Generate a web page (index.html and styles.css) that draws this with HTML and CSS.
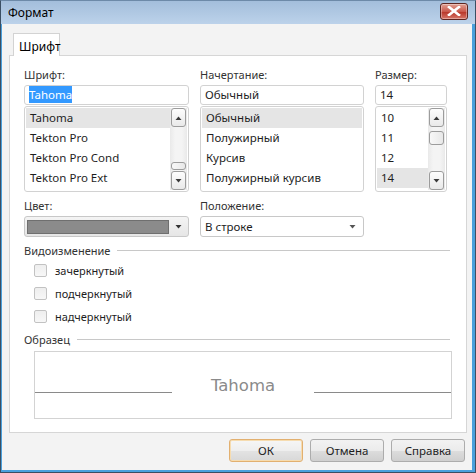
FILE: index.html
```html
<!DOCTYPE html>
<html>
<head>
<meta charset="utf-8">
<link rel="stylesheet" href="styles.css">
</head>
<body>
<div class="window">
  <div class="titlebar">
    <span class="title">Формат</span>
    <div class="close"><svg width="14" height="10" viewBox="0 0 14 10"><path d="M2 1 L12 9 M12 1 L2 9" stroke="#fff" stroke-width="2.6" stroke-linecap="square" fill="none"/></svg></div>
  </div>
  <div class="client">
    <div class="tabs"><div class="tab">Шрифт</div></div>
    <div class="panel">
      <div class="grid">
        <div class="field">
          <div class="label">Шрифт:</div>
          <div class="input"><span class="sel">Tahoma</span></div>
          <div class="list">
            <div class="items">
              <div class="item on">Tahoma</div>
              <div class="item">Tekton Pro</div>
              <div class="item">Tekton Pro Cond</div>
              <div class="item">Tekton Pro Ext</div>
            </div>
            <div class="sb">
              <div class="sbtn"><svg width="7" height="4" viewBox="0 0 7 4"><path d="M0.5 4 L3.5 0.5 L6.5 4Z" fill="#3a3a3a"/></svg></div>
              <div class="track"><div class="thumb t1"></div></div>
              <div class="sbtn"><svg width="7" height="4" viewBox="0 0 7 4"><path d="M0.5 0 L3.5 3.5 L6.5 0Z" fill="#3a3a3a"/></svg></div>
            </div>
          </div>
        </div>
        <div class="field">
          <div class="label">Начертание:</div>
          <div class="input">Обычный</div>
          <div class="list">
            <div class="items">
              <div class="item on">Обычный</div>
              <div class="item">Полужирный</div>
              <div class="item">Курсив</div>
              <div class="item">Полужирный курсив</div>
            </div>
          </div>
        </div>
        <div class="field">
          <div class="label">Размер:</div>
          <div class="input">14</div>
          <div class="list">
            <div class="items">
              <div class="item">10</div>
              <div class="item">11</div>
              <div class="item">12</div>
              <div class="item on">14</div>
            </div>
            <div class="sb">
              <div class="sbtn"><svg width="7" height="4" viewBox="0 0 7 4"><path d="M0.5 4 L3.5 0.5 L6.5 4Z" fill="#3a3a3a"/></svg></div>
              <div class="track"><div class="thumb t2"></div></div>
              <div class="sbtn"><svg width="7" height="4" viewBox="0 0 7 4"><path d="M0.5 0 L3.5 3.5 L6.5 0Z" fill="#3a3a3a"/></svg></div>
            </div>
          </div>
        </div>
        <div class="field">
          <div class="label">Цвет:</div>
          <div class="combo color">
            <div class="swatch"></div>
            <div class="arrow"><svg width="7" height="4" viewBox="0 0 7 4"><path d="M0.5 0 L3.5 3.5 L6.5 0Z" fill="#333"/></svg></div>
          </div>
        </div>
        <div class="field">
          <div class="label">Положение:</div>
          <div class="combo pos">
            <span class="ctext">В строке</span>
            <div class="arrow"><svg width="7" height="4" viewBox="0 0 7 4"><path d="M0.5 0 L3.5 3.5 L6.5 0Z" fill="#555"/></svg></div>
          </div>
        </div>
      </div>

      <div class="group"><span>Видоизменение</span><div class="rule"></div></div>
      <div class="checks">
        <div class="check"><div class="box"></div><span>зачеркнутый</span></div>
        <div class="check"><div class="box"></div><span>подчеркнутый</span></div>
        <div class="check"><div class="box"></div><span>надчеркнутый</span></div>
      </div>

      <div class="group g2"><span>Образец</span><div class="rule"></div></div>
      <div class="sample">
        <div class="sline"></div>
        <span class="stext">Tahoma</span>
        <div class="sline"></div>
      </div>
    </div>
    <div class="buttons">
      <div class="btn def">ОК</div>
      <div class="btn">Отмена</div>
      <div class="btn">Справка</div>
    </div>
  </div>
</div>
</body>
</html>
```

FILE: styles.css
```css
* { box-sizing: border-box; }
html, body { margin: 0; padding: 0; }
body {
  width: 476px; height: 473px; overflow: hidden;
  font-family: "Noto Sans", "Liberation Sans", sans-serif;
  font-size: 11px; color: #1e1e1e;
}
.window {
  width: 476px; height: 473px;
  border: 1px solid #3b4f63;
  border-top-color: #6d8aa8;
  background: #4aa0dc;
  display: flex; flex-direction: column;
}
.titlebar {
  height: 23px; flex: none;
  background: linear-gradient(#a3bedb, #bcd2ea);
  display: flex; align-items: center; justify-content: space-between;
  padding: 0 7px 0 7px;
}
.title { font-size: 12px; color: #000; }
.close {
  width: 28px; height: 17px; margin-top: -3px;
  border: 1px solid #5e2621; border-radius: 3px;
  background: linear-gradient(#e1a194, #c9594c 50%, #b8382b 55%, #d77668);
  display: flex; align-items: center; justify-content: center;
  box-shadow: inset 0 0 0 1px rgba(255,255,255,0.35);
}
.client {
  flex: 1; background: #f3f3f3;
  margin: 0 3px 2px 1px;
  padding: 9px 0 0 7px;
  display: flex; flex-direction: column;
}
.tabs { display: flex; padding-left: 4px; height: 23px; position: relative; z-index: 1; }
.tab {
  width: 47px; height: 23px;
  border: 1px solid #d3d3d3; border-bottom: none;
  background: #fff; padding: 4px 0 0 5px; font-size: 12px; color: #000;
}
.panel {
  width: 458px; height: 378px; margin-top: -1px;
  border: 1px solid #d6d6d6; background: #fff;
  padding: 11px 15px 0 14px;
}
.grid {
  display: grid;
  grid-template-columns: 165px 164px 72px;
  column-gap: 11px; row-gap: 6px;
}
.label { height: 15px; line-height: 15px; color: #333; }
.input {
  margin-top: 3px; height: 20px;
  border: 1px solid #d2d2d2; border-radius: 3px;
  padding: 0 4px; line-height: 18px; color: #1e1e1e; font-size: 11.5px;
}
.sel { background: #3399ff; color: #fff; padding: 1px 0; }
.list {
  margin-top: 1px; height: 86px;
  border: 1px solid #d2d2d2; border-radius: 3px;
  display: flex; padding: 1px;
}
.items { flex: 1; }
.item { height: 20px; line-height: 20px; padding-left: 4px; font-size: 11.5px; }
.item.on { background: #e5e5e5; }
.sb {
  width: 17px; display: flex; flex-direction: column;
  background: linear-gradient(90deg, #e9e9e9, #f4f4f4 30%, #f4f4f4 70%, #e9e9e9);
}
.sbtn {
  height: 19px; margin: 0 1px;
  border: 1px solid #9c9c9c; border-radius: 3px;
  background: linear-gradient(#fdfdfd, #e9e9e9);
  display: flex; align-items: center; justify-content: center;
}
.track { flex: 1; padding: 0 1px; }
.thumb {
  height: 8px; border: 1px solid #9c9c9c; border-radius: 3px;
  background: linear-gradient(90deg, #f8f8f8, #e8e8e8);
}
.t1 { margin-top: 35px; }
.t2 { margin-top: 4px; height: 14px; }
.combo {
  margin-top: 3px; height: 21px;
  border: 1px solid #c8c8c8; border-radius: 3px;
  display: flex; align-items: center;
}
.combo.color { background: linear-gradient(#f4f4f4, #e6e6e6); padding: 0 0 0 2px; }
.swatch { width: 142px; height: 14px; background: #8b8b8b; border: 1px solid #6f6f6f; }
.combo .arrow { flex: 1; display: flex; justify-content: center; }
.combo.pos { background: #fff; padding-left: 4px; }
.ctext { flex: 1; font-size: 11.5px; }
.combo.pos .arrow { flex: none; width: 22px; }
.group { display: flex; align-items: center; margin-top: 6px; height: 15px; color: #333; }
.group .rule { flex: 1; height: 1px; background: #c8c8c8; margin-left: 7px; margin-right: 1px; }
.checks { margin-top: 1px; padding-left: 10px; }
.check { height: 23px; display: flex; align-items: center; }
.box {
  width: 13px; height: 13px; border: 1px solid #c2c2c2; border-radius: 2px;
  background: linear-gradient(#eeeeee, #f7f7f7); margin-right: 8px;
}
.g2 { margin-top: 4px; }
.sample {
  margin: 4px 0 0 10px; width: 418px; height: 68px;
  border: 1px solid #d3d3d3;
  display: flex; align-items: center;
}
.sline { flex: 1; height: 1px; background: #8a8a8a; margin-top: 14px; }
.stext {
  font-family: "DejaVu Sans", sans-serif; font-size: 16.5px; color: #8a8a8a;
  padding: 0 39px; margin-top: 0;
}
.buttons { display: flex; justify-content: flex-end; gap: 7px; padding: 6px 7px 0 0; }
.btn {
  width: 74px; height: 23px;
  border: 1px solid #acacac; border-radius: 3px;
  background: linear-gradient(#f2f2f2, #ebebeb 50%, #dddddd 51%, #cfcfcf);
  display: flex; align-items: center; justify-content: center;
  font-size: 11.5px; color: #1e1e1e;
}
.btn.def { border-color: #e2b070; background: linear-gradient(#f6f6f6, #eeeeee 50%, #e3e3e3 51%, #d8d8d8); box-shadow: inset 0 0 0 1px #f6dcb0; }
```
